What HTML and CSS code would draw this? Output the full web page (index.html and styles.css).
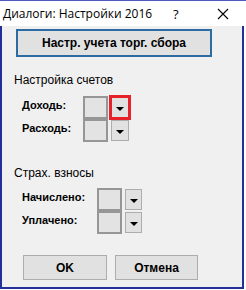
FILE: index.html
```html
<!DOCTYPE html>
<html lang="ru">
    <head>
        <meta charset="UTF-8">
        <title>Диалоги: Настройки 2016</title>
        <link rel="stylesheet" href="styles.css">
    </head>
    <body>
        <div class="window">
            <div class="titlebar">
                <span class="title">Диалоги: Настройки 2016</span>
                <span class="help">?</span>
                <svg class="close" width="12" height="12" viewBox="0 0 12 12">
                    <path d="M1 1 L11 11 M11 1 L1 11" stroke="#000" stroke-width="1.1" fill="none"/>
                </svg>
            </div>

            <div class="client">
                <button class="btn btn-wide">Настр. учета торг. сбора</button>

                <div class="group group-accounts">
                    <div class="group-title">Настройка счетов</div>
                    <div class="row">
                        <span class="label">Доходь:</span>
                        <span class="box"></span>
                        <span class="drop drop-marked"><i class="arrow"></i></span>
                    </div>
                    <div class="row">
                        <span class="label">Расходь:</span>
                        <span class="box"></span>
                        <span class="drop"><i class="arrow"></i></span>
                    </div>
                </div>

                <div class="group group-insurance">
                    <div class="group-title">Страх. взносы</div>
                    <div class="row">
                        <span class="label">Начислено:</span>
                        <span class="box"></span>
                        <span class="drop"><i class="arrow"></i></span>
                    </div>
                    <div class="row">
                        <span class="label">Уплачено:</span>
                        <span class="box"></span>
                        <span class="drop"><i class="arrow"></i></span>
                    </div>
                </div>

                <div class="actions">
                    <button class="btn btn-ok">OK</button>
                    <button class="btn btn-cancel">Отмена</button>
                </div>
            </div>
        </div>
    </body>
</html>
```

FILE: styles.css
```css
body {
    margin: 0;
    background-color: #ffffff;
    font-family: "Liberation Sans", Arial, sans-serif;
    font-size: 12px;
    color: #000;
}

.window {
    width: 246px;
    height: 290px;
    display: flex;
    flex-direction: column;
    box-sizing: border-box;
    border-top: 1px solid #4a5cc0;
}

.titlebar {
    height: 25px;
    display: flex;
    align-items: center;
    background-color: #ffffff;
    flex-shrink: 0;
}

.title {
    margin-left: 3px;
    font-family: "Open Sans", "Liberation Sans", sans-serif;
    font-size: 12px;
    width: 170px;
}

.help {
    font-family: "Open Sans", "Liberation Sans", sans-serif;
    font-size: 13px;
    width: 44px;
}

.close {
    display: block;
}

.client {
    flex: 1;
    margin-right: 2px;
    margin-bottom: 1px;
    padding-left: 12px;
    background-color: #f0f0f0;
    border-left: 2px solid #23309a;
    border-right: 2px solid #23309a;
    border-bottom: 2px solid #23309a;
}

.btn {
    font-family: "Liberation Sans", Arial, sans-serif;
    font-size: 12px;
    font-weight: bold;
    background-color: #e1e1e1;
    border: 1px solid #adadad;
    padding: 0;
    color: #000;
    box-sizing: border-box;
}

.btn-wide {
    display: block;
    margin: 3px 0 0 2px;
    width: 196px;
    height: 28px;
    border: 2px solid #2b6ca3;
}

.group-title {
    line-height: 15px;
}

.group-accounts {
    margin-top: 16px;
}

.group-insurance {
    margin-top: 24px;
}

.group-accounts .group-title {
    margin-bottom: 8px;
}

.group-insurance .group-title {
    margin-bottom: 7px;
}

.row {
    display: flex;
    align-items: flex-start;
    height: 23px;
    padding-left: 8px;
}

.label {
    padding-top: 2px;
    line-height: 15px;
    font-weight: bold;
    font-size: 11px;
}

.group-accounts .label {
    width: 61px;
}

.group-insurance .label {
    width: 75px;
}

.box {
    width: 25px;
    height: 23px;
    box-sizing: border-box;
    border: 2px solid #969696;
    background-color: #e3e3e3;
}

.row + .row .box {
    margin-top: 0;
}

.drop {
    width: 18px;
    height: 21px;
    margin: 1px 0 0 3px;
    box-sizing: border-box;
    border: 1px solid #adadad;
    background-color: #e1e1e1;
    display: flex;
    align-items: center;
    justify-content: center;
}

.group-insurance .drop {
    width: 17px;
    margin-left: 3px;
}

.drop-marked {
    border: 1px solid #e8202a;
    outline: 2px solid #e8202a;
}

.arrow {
    width: 0;
    height: 0;
    margin-top: 2px;
    border-left: 4px solid transparent;
    border-right: 4px solid transparent;
    border-top: 4px solid #000;
}

.actions {
    display: flex;
    gap: 8px;
    margin: 21px 0 0 9px;
}

.btn-ok {
    width: 84px;
    height: 25px;
}

.btn-cancel {
    width: 83px;
    height: 25px;
}
```
